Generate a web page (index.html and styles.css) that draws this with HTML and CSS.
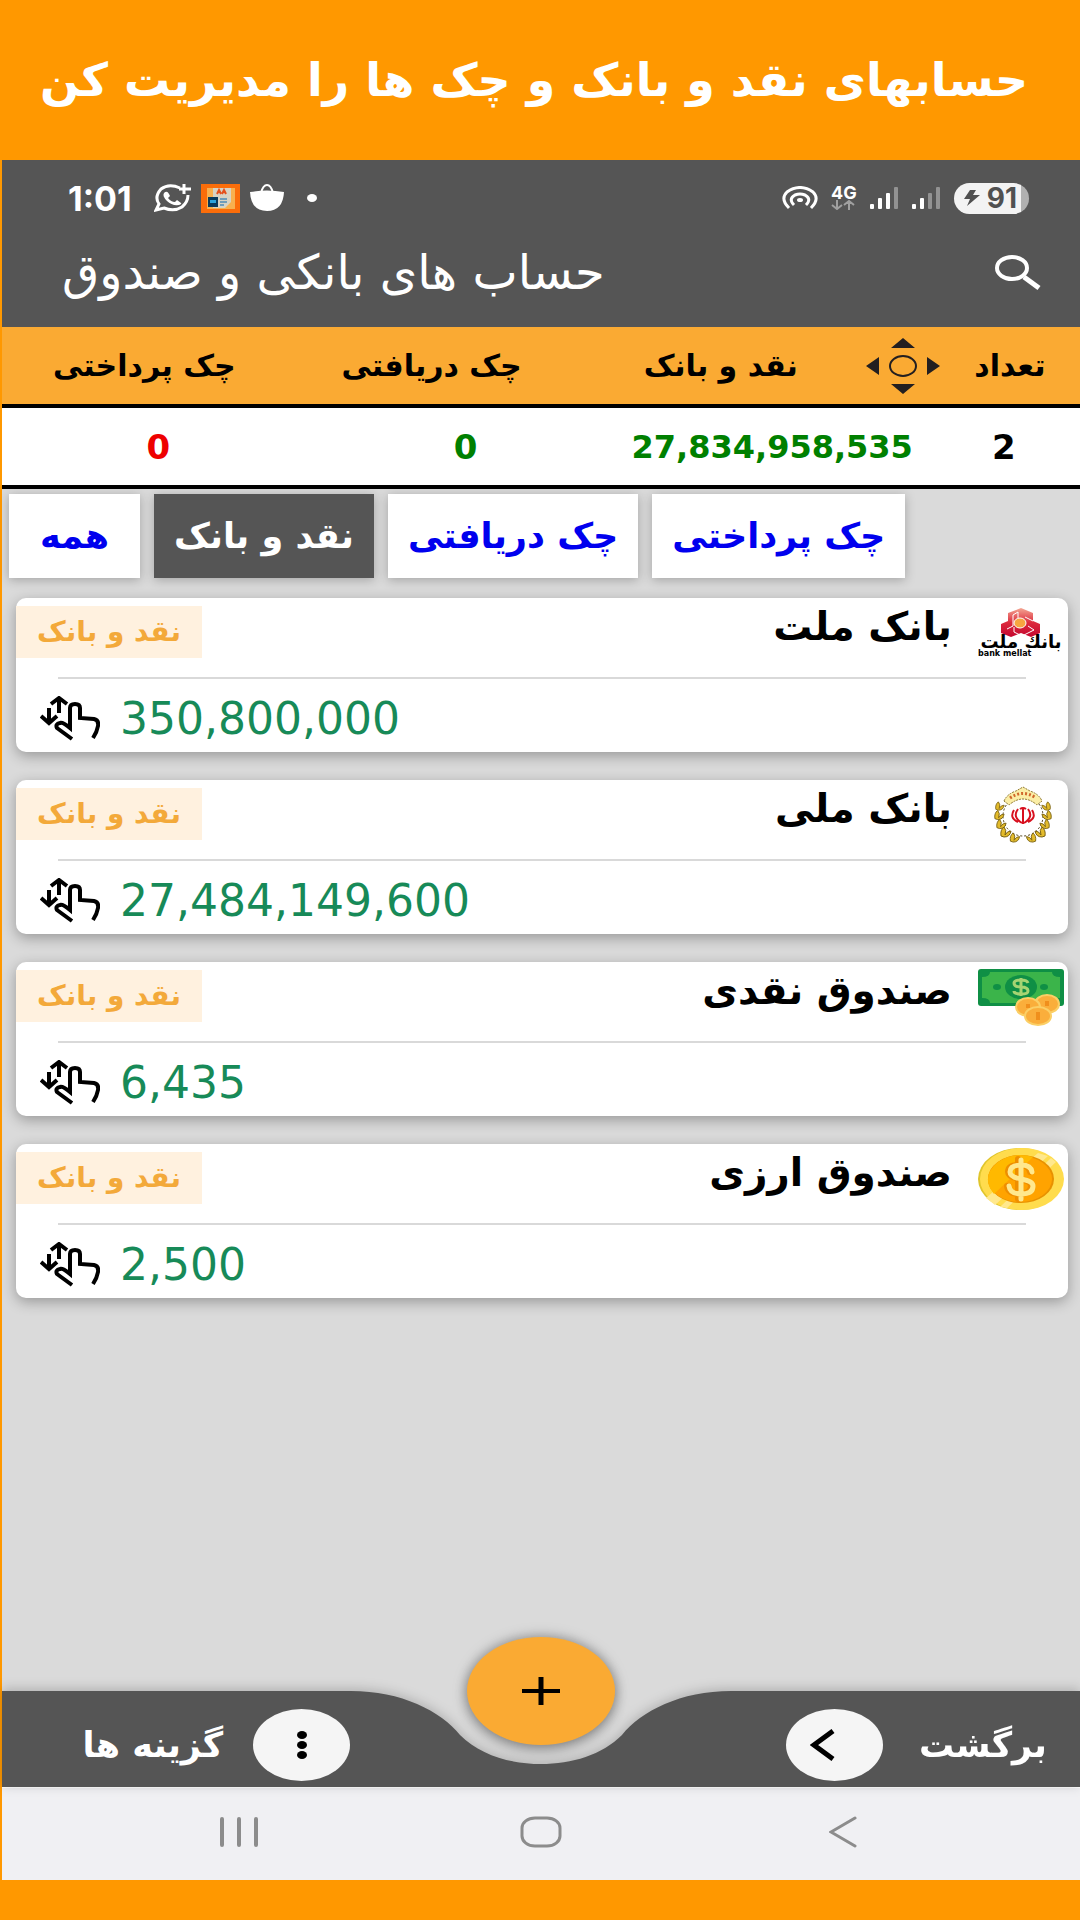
FILE: index.html
```html
<!DOCTYPE html>
<html lang="fa">
<head>
  <meta charset="UTF-8">
  <title>حساب های بانکی و صندوق</title>
  <meta name="viewport" content="width=device-width, initial-scale=1.0">
  <link rel="stylesheet" href="styles.css">
</head>
<body>
  <!-- Shared icons -->
  <svg width="0" height="0" class="sprite" aria-hidden="true">
    <symbol id="swipe" viewBox="0 0 60 46">
      <g fill="none" stroke="#000" stroke-width="4">
        <path d="M19 17V3M11 8l8-6 8 6"/>
        <path d="M9 12v14M1 20l8 7 8-7"/>
        <path d="M32 43L17 32q-2-4 3-5 3-1 10 5V12q0-4 5-4t5 4v10l14 1q5 1 4 7-1 6-5 12"/>
      </g>
    </symbol>
    <symbol id="leaf" viewBox="0 0 12 12">
      <path d="M1 10Q0 4 4 1q3 3 1 8 2-4 6-4-1 6-7 6z" fill="#e3bb2b" stroke="#7a6215"/>
    </symbol>
  </svg>

  <header class="promo">
    <h1>حسابهای نقد و بانک و چک ها را مدیریت کن</h1>
  </header>

  <div class="phone">
    <!-- Status bar -->
    <div class="status">
      <div class="status-side">
        <span class="clock">1:01</span>
        <svg width="37" height="28" viewBox="0 0 37 28">
          <path d="M26 4Q15-1 7 5q-7 8-2 15l-3 6 8-2q10 4 18-1 6-5 6-12" fill="none" stroke="#fff" stroke-width="3"/>
          <path d="M30 0v10M25 5h12" stroke="#fff" stroke-width="3"/>
          <path d="M10 9q3-3 5 1l1 2-2 2q3 4 7 4l2-2 4 3q1 1-2 2-7 1-12-4-5-5-3-8z" fill="#fff"/>
        </svg>
        <svg width="39" height="29" viewBox="0 0 39 29">
          <path d="M0 0h39v29H0z" fill="#fb6d0a"/>
          <path d="M6 4h28v21H6z" fill="#f8b04e"/>
          <path d="M12 4h18v14l-6 6H12z" fill="#d8d3c4"/>
          <path d="M16 10l2-4 2 4M21 10l2-4 2 4" fill="none" stroke="#e5501c" stroke-width="2"/>
          <path d="M7 13h10v10H7z" fill="#083a5c"/>
          <path d="M9 16h6v3H9z" fill="#2aa3dc"/>
          <path d="M19 15h7M19 18h7M19 21h4" stroke="#6f9dbb" stroke-width="2"/>
        </svg>
        <svg width="34" height="28" viewBox="0 0 34 28">
          <path d="M11 9q2-8 6-8t6 8" fill="none" stroke="#fff" stroke-width="2"/>
          <path d="M0 8q17-3 34 0-1 19-17 19T0 8z" fill="#fff"/>
        </svg>
        <svg class="dot" width="12" height="8" viewBox="0 0 12 8"><ellipse cx="6" cy="4" rx="5" ry="4" fill="#fff"/></svg>
      </div>
      <div class="status-side status-right">
        <svg width="36" height="24" viewBox="0 0 36 24" fill="none" stroke="#fff" stroke-width="3">
          <path d="M7 22Q-2 13 5 6q13-9 26 0 7 7-2 16"/>
          <path d="M12 19q-6-6 1-10 5-2 10 0 7 4 1 10"/>
          <ellipse cx="18" cy="14" rx="3" ry="2" fill="#fff" stroke="none"/>
        </svg>
        <span class="network">4G
          <svg width="24" height="10" viewBox="0 0 24 10" fill="none" stroke="#a0a0a0" stroke-width="2"><path d="M6 0v9M1 5l5 4 5-4M18 10V1M13 5l5-4 5 4"/></svg>
        </span>
        <svg width="29" height="22" viewBox="0 0 29 22" fill="#fff"><rect y="17" width="4" height="5" rx="1"/><rect x="8" y="11" width="4" height="11" rx="1"/><rect x="16" y="6" width="4" height="16" rx="1"/><rect x="24" width="4" height="22" rx="1" fill="#929292"/></svg>
        <svg width="29" height="22" viewBox="0 0 29 22" fill="#fff"><rect y="17" width="4" height="5" rx="1"/><rect x="8" y="11" width="4" height="11" rx="1"/><rect x="16" y="6" width="4" height="16" rx="1" fill="#929292"/><rect x="24" width="4" height="22" rx="1" fill="#929292"/></svg>
        <span class="battery">
          <svg width="16" height="16" viewBox="0 0 16 16"><path d="M6 0h6L9 5h7L3 16l3-7H0z" fill="#505050"/></svg>91
        </span>
      </div>
    </div>

    <!-- App bar -->
    <div class="appbar">
      <h2>حساب های بانکی و صندوق</h2>
      <button class="icon-btn" aria-label="جستجو">
        <svg width="47" height="36" viewBox="0 0 47 36" fill="none" stroke="#fff">
          <ellipse cx="17" cy="14" rx="15" ry="11" stroke-width="4"/>
          <path d="M29 23l15 11" stroke-width="5"/>
        </svg>
      </button>
    </div>

    <!-- Summary -->
    <table class="summary" dir="rtl">
      <thead>
        <tr>
          <th class="col-count">تعداد</th>
          <th class="col-cash">
            <div class="cash-head">
              <svg width="74" height="56" viewBox="0 0 74 56" fill="#231f20">
                <path d="M37 0l12 10H25zM37 56l12-10H25zM0 28l13-9v18zM74 28l-13-9v18z"/>
                <ellipse cx="37" cy="28" rx="13" ry="10" fill="none" stroke="#231f20" stroke-width="2"/>
              </svg>
              نقد و بانک
            </div>
          </th>
          <th class="col-received">چک دریافتی</th>
          <th class="col-paid">چک پرداختی</th>
        </tr>
      </thead>
      <tbody>
        <tr>
          <td class="count">2</td>
          <td class="green total">27,834,958,535</td>
          <td class="green">0</td>
          <td class="red">0</td>
        </tr>
      </tbody>
    </table>

    <!-- Filters -->
    <nav class="tabs">
      <a href="#all">همه</a>
      <a href="#cash" class="active">نقد و بانک</a>
      <a href="#received">چک دریافتی</a>
      <a href="#paid">چک پرداختی</a>
    </nav>

    <!-- Accounts -->
    <main class="accounts">
      <article class="card">
        <div class="card-head">
          <span class="tag">نقد و بانک</span>
          <h3>بانک ملت</h3>
          <svg class="logo" viewBox="0 0 86 66">
            <defs>
              <linearGradient id="red" x1="0" y1="0" x2="0" y2="1"><stop offset="0" stop-color="#f4a793"/><stop offset=".5" stop-color="#dc2b3d"/><stop offset="1" stop-color="#c4062f"/></linearGradient>
            </defs>
            <path d="M43 10l12 5v8l7 3v9l-9 4-10-4-10 4-10-4v-9l7-3v-8z" fill="url(#red)"/>
            <path d="M40 20v-6l-5 3v11l-6 3M47 19l8 4M50 28l6 4-10 5M36 29v5l8 4" stroke="#fff" fill="none"/>
            <ellipse cx="42" cy="25" rx="6" ry="5" fill="#f7a540" stroke="#fff"/>
            <text x="43" y="50" text-anchor="middle" class="mellat-fa">بانك ملت</text>
            <text x="0" y="58" class="mellat-en">bank mellat</text>
          </svg>
        </div>
        <div class="card-foot">
          <svg class="swipe"><use href="#swipe"/></svg>
          <span class="amount">350,800,000</span>
        </div>
      </article>

      <article class="card">
        <div class="card-head">
          <span class="tag">نقد و بانک</span>
          <h3>بانک ملی</h3>
          <svg class="logo" viewBox="0 0 86 66">
            <circle cx="45" cy="36" r="20" fill="#fff" stroke="#4a3b10" stroke-dasharray="2 2"/>
            <use href="#leaf" x="17" y="20" width="10" height="12"/>
            <use href="#leaf" x="16" y="29" width="11" height="12"/>
            <use href="#leaf" x="18" y="38" width="11" height="12"/>
            <use href="#leaf" x="22" y="46" width="12" height="12"/>
            <use href="#leaf" x="31" y="52" width="12" height="11"/>
            <g transform="matrix(-1 0 0 1 90 0)">
              <use href="#leaf" x="17" y="20" width="10" height="12"/>
              <use href="#leaf" x="16" y="29" width="11" height="12"/>
              <use href="#leaf" x="18" y="38" width="11" height="12"/>
              <use href="#leaf" x="22" y="46" width="12" height="12"/>
              <use href="#leaf" x="31" y="52" width="12" height="11"/>
            </g>
            <path d="M26 21q3-7 12-10l7-4 7 4q9 3 12 10l-5 4q-14-12-28 0z" fill="#fbeea6" stroke="#8e7730" stroke-dasharray="2 1"/>
            <path d="M32 18q13-9 26 0" fill="none" stroke="#d0682c" stroke-width="3" stroke-dasharray="2 2"/>
            <g fill="none" stroke="#d80f1e" stroke-width="2">
              <path d="M45 28v16M42 29q3-2 6 0M40 29q-6 8 4 14M50 29q6 8-4 14M36 30q-5 8 4 12M54 30q5 8-4 12"/>
            </g>
          </svg>
        </div>
        <div class="card-foot">
          <svg class="swipe"><use href="#swipe"/></svg>
          <span class="amount">27,484,149,600</span>
        </div>
      </article>

      <article class="card">
        <div class="card-head">
          <span class="tag">نقد و بانک</span>
          <h3>صندوق نقدی</h3>
          <svg class="logo" viewBox="0 0 86 66">
            <rect y="7" width="86" height="37" rx="3" fill="#0f8f45"/>
            <path d="M12 10h62q0 5 8 5v21q-8 0-8 5H12q0-5-8-5V15q8 0 8-5z" fill="#3bb44a"/>
            <ellipse cx="43" cy="25" rx="16" ry="12" fill="#0f8f45"/>
            <ellipse cx="19" cy="25" rx="4" ry="3" fill="#0f8f45"/>
            <ellipse cx="66" cy="25" rx="4" ry="3" fill="#0f8f45"/>
            <path d="M50 21q-1-3-7-3-7 0-7 3 0 4 7 4 7 0 7 4 0 3-7 3t-7-3M43 16v18" fill="none" stroke="#a6d472" stroke-width="3"/>
            <g fill="#faae3b" stroke="#fbcf66" stroke-width="2">
              <ellipse cx="69" cy="42" rx="12" ry="9"/>
              <ellipse cx="50" cy="45" rx="12" ry="9"/>
              <ellipse cx="60" cy="54" rx="13" ry="9"/>
            </g>
            <path d="M60 50v8M50 42v4M69 39v5" stroke="#f08f1c" stroke-width="4"/>
          </svg>
        </div>
        <div class="card-foot">
          <svg class="swipe"><use href="#swipe"/></svg>
          <span class="amount">6,435</span>
        </div>
      </article>

      <article class="card">
        <div class="card-head">
          <span class="tag">نقد و بانک</span>
          <h3>صندوق ارزی</h3>
          <svg class="logo" viewBox="0 0 86 66">
            <ellipse cx="42" cy="35" rx="42" ry="31" fill="#e0c52c"/>
            <ellipse cx="44" cy="35" rx="42" ry="31" fill="#ffdc4d"/>
            <path d="M60 9l10 3L17 61l-9-7zM73 14l5 4L29 64l-7-1z" fill="#ffe88d"/>
            <ellipse cx="43" cy="35" rx="33" ry="24" fill="#e89100"/>
            <ellipse cx="42" cy="35" rx="32" ry="23" fill="#ffa300"/>
            <path d="M55 13q-18-6-35 5-18 15-4 32z" fill="#ffb900"/>
            <path d="M52 28q-1-7-11-7-11 0-11 7 0 5 11 7 12 2 12 7 0 8-12 8-11 0-12-8M40 15v40" fill="none" stroke="#ee8e00" stroke-width="6" stroke-linecap="round"/>
            <path d="M54 28q-1-7-11-7-11 0-11 7 0 5 11 7 12 2 12 7 0 8-12 8-11 0-12-8M43 16v39" fill="none" stroke="#ffe88d" stroke-width="5" stroke-linecap="round"/>
          </svg>
        </div>
        <div class="card-foot">
          <svg class="swipe"><use href="#swipe"/></svg>
          <span class="amount">2,500</span>
        </div>
      </article>
    </main>

    <!-- Bottom bar -->
    <footer class="bottombar">
      <button class="bar-btn options">
        <span>گزینه ها</span>
        <span class="round"><svg width="10" height="28" viewBox="0 0 10 28"><ellipse cx="5" cy="4" rx="5" ry="4"/><ellipse cx="5" cy="14" rx="5" ry="4"/><ellipse cx="5" cy="24" rx="5" ry="4"/></svg></span>
      </button>
      <div class="notch">
        <svg width="380" height="96" viewBox="0 0 380 96"><path d="M0 0C50 0 90 20 109 44 129 64 159 73 190 73S251 64 271 44C290 20 330 0 380 0V96H0z" fill="#555"/></svg>
        <button class="fab" aria-label="افزودن">
          <svg width="38" height="28" viewBox="0 0 38 28"><path d="M0 14h38" stroke="#000" stroke-width="4"/><path d="M19 0v28" stroke="#000" stroke-width="5"/></svg>
        </button>
      </div>
      <button class="bar-btn back">
        <span class="round"><svg width="49" height="32" viewBox="0 0 49 32"><path d="M23 2L4 16l19 14" fill="none" stroke="#000" stroke-width="5"/></svg></span>
        <span>برگشت</span>
      </button>
    </footer>

    <!-- System navigation -->
    <div class="sysnav">
      <button class="icon-btn" aria-label="Recents"><svg width="38" height="30" viewBox="0 0 38 30"><path d="M2 2v26M19 2v26M36 2v26" stroke="#8c8c8c" stroke-width="4" stroke-linecap="round"/></svg></button>
      <button class="icon-btn" aria-label="Home"><svg width="42" height="32" viewBox="0 0 42 32"><rect x="2" y="2" width="38" height="28" rx="13" ry="10" fill="none" stroke="#8c8c8c" stroke-width="3"/></svg></button>
      <button class="icon-btn" aria-label="Back"><svg width="28" height="32" viewBox="0 0 28 32"><path d="M26 2L2 16l24 14" fill="none" stroke="#8c8c8c" stroke-width="3" stroke-linecap="round"/></svg></button>
    </div>
  </div>
</body>
</html>
```
FILE: styles.css
```css
:root {
  --promo: #ff9800;
  --accent: #faaa33;
  --dark: #555;
  --page-bg: #dadada;
}
* {
  box-sizing: border-box;
}
body {
  margin: 0;
  min-height: 100vh;
  display: flex;
  flex-direction: column;
  background-color: var(--promo);
  color: #000;
  font-family: 'DejaVu Sans', sans-serif;
}
h1, h2, h3 {
  margin: 0;
}
svg {
  display: block;
  flex-shrink: 0;
}
button {
  padding: 0;
  border: none;
  background: none;
  font-family: inherit;
  cursor: pointer;
}
.sprite {
  position: absolute;
}
.promo {
  height: 160px;
  display: flex;
  align-items: center;
  justify-content: center;
  padding-right: 12px;
  direction: rtl;
  color: #fff;
}
.promo h1 {
  font-size: 46px;
  white-space: nowrap;
}
.phone {
  flex: 1;
  display: flex;
  flex-direction: column;
  margin: 0 0 40px 2px;
  background-color: var(--page-bg);
}

/* Status bar */
.status {
  display: flex;
  justify-content: space-between;
  height: 76px;
  padding: 0 51px 0 66px;
  background-color: var(--dark);
  color: #fff;
}
.status-side {
  display: flex;
  align-items: center;
  gap: 10px;
}
.status-right {
  gap: 13px;
}
.clock {
  margin-right: 12px;
  font: bold 34px Inter, sans-serif;
}
.dot {
  margin-left: 12px;
}
.network {
  font: bold 18px/14px Inter, sans-serif;
}
.battery {
  display: flex;
  align-items: center;
  gap: 7px;
  height: 31px;
  padding: 0 12px 0 10px;
  border-radius: 16px;
  background: linear-gradient(90deg, #f3f3f3 90%, #b0b0b0 90%);
  color: #505050;
  font: bold 28px Inter, sans-serif;
}

/* App bar */
.appbar {
  display: flex;
  align-items: center;
  justify-content: space-between;
  height: 91px;
  padding: 0 38px 20px 60px;
  background-color: var(--dark);
  color: #fff;
}
.appbar h2 {
  direction: rtl;
  font-size: 48px;
  font-weight: normal;
  line-height: 60px;
}

/* Summary */
.summary {
  width: 100%;
  table-layout: fixed;
  border-spacing: 0;
  font-size: 30px;
  font-weight: bold;
}
.summary thead {
  background-color: var(--accent);
}
.summary tbody {
  background-color: #fff;
}
.summary th, .summary td {
  height: 81px;
  padding: 0;
  border-bottom: 4px solid #000;
  text-align: center;
}
.summary td {
  font-size: 34px;
}
.summary td.count,
.summary td.total {
  padding-right: 12px;
}
.summary td.total {
  font-size: 32px;
}
.summary .col-count { width: 13%; }
.summary .col-cash { width: 30%; }
.summary .col-received { width: 28%; padding-right: 68px; }
.summary .col-paid { width: 29%; padding-right: 28px; }
.cash-head {
  display: flex;
  align-items: center;
  gap: 68px;
}
.green { color: #008000; }
.red { color: #ee0000; }

/* Filters */
.tabs {
  display: flex;
  gap: 14px;
  padding: 5px 7px;
}
.tabs a {
  display: flex;
  align-items: center;
  justify-content: center;
  height: 84px;
  min-width: 131px;
  padding: 0 20px;
  background-color: #fff;
  box-shadow: 0 2px 10px rgba(0, 0, 0, 0.25);
  color: #0000ee;
  direction: rtl;
  font-size: 35px;
  font-weight: bold;
  text-decoration: none;
  white-space: nowrap;
}
.tabs a.active {
  background-color: var(--dark);
  color: #fff;
}

/* Accounts */
.accounts {
  flex: 1;
  display: flex;
  flex-direction: column;
  gap: 28px;
  padding: 15px 12px 40px 14px;
}
.card {
  border-radius: 10px;
  background-color: #fff;
  box-shadow: 0 4px 14px rgba(0, 0, 0, 0.3);
}
.card-head {
  display: flex;
  align-items: flex-start;
  height: 79px;
  padding-right: 4px;
}
.tag {
  margin-top: 8px;
  padding: 0 21px;
  background-color: #fff1df;
  color: #f3a93a;
  direction: rtl;
  font-size: 28px;
  font-weight: bold;
  line-height: 52px;
}
.card h3 {
  flex: 1;
  margin-right: 26px;
  direction: rtl;
  font-size: 39px;
  line-height: 58px;
}
.logo {
  width: 86px;
  height: 66px;
}
.mellat-fa {
  font: bold 18px 'DejaVu Sans', sans-serif;
}
.mellat-en {
  font: bold 8px 'DejaVu Sans', sans-serif;
}
.card-foot {
  display: flex;
  align-items: center;
  gap: 20px;
  height: 75px;
  margin: 0 42px;
  padding-top: 6px;
  border-top: 2px solid #d9d9d9;
}
.swipe {
  width: 60px;
  height: 46px;
  margin-left: -18px;
}
.amount {
  color: #178a58;
  font-size: 44px;
}

/* Bottom bar */
.bottombar {
  display: grid;
  grid-template-columns: 1fr 378px 1fr;
  height: 96px;
  filter: drop-shadow(0 -2px 6px rgba(0, 0, 0, 0.2));
}
.bar-btn {
  display: flex;
  align-items: center;
  padding-top: 12px;
  background-color: var(--dark);
  color: #fff;
  font-size: 35px;
  font-weight: bold;
  line-height: 72px;
}
.options {
  justify-content: flex-end;
  gap: 30px;
  padding-right: 2px;
}
.back {
  justify-content: flex-start;
  gap: 36px;
  padding-left: 56px;
}
.round {
  display: flex;
  align-items: center;
  justify-content: center;
  width: 97px;
  height: 72px;
  border-radius: 50%;
  background-color: #f5f5f5;
}
.notch {
  position: relative;
}
.notch > svg {
  margin: 0 -1px;
}
.fab {
  position: absolute;
  top: -54px;
  left: 50%;
  display: flex;
  align-items: center;
  justify-content: center;
  width: 148px;
  height: 108px;
  margin-left: -74px;
  border-radius: 50%;
  background-color: var(--accent);
  box-shadow: 0 4px 14px rgba(0, 0, 0, 0.35);
}

/* System navigation */
.sysnav {
  display: grid;
  grid-template-columns: 1fr 1fr 1fr;
  justify-items: center;
  height: 93px;
  padding: 0 86px 4px;
  border-top: 1px solid #fff;
  background-color: #f0f0f3;
}
```
